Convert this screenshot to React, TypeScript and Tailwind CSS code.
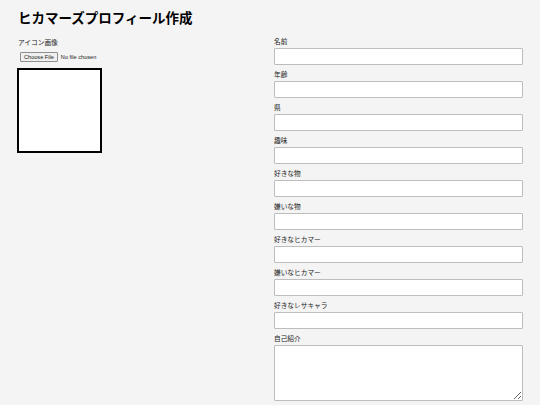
import React from 'react'

const fields = [
    '名前',
    '年齢',
    '県',
    '趣味',
    '好きな物',
    '嫌いな物',
    '好きなヒカマー',
    '嫌いなヒカマー',
    '好きなレサキャラ',
]

export default function App() {
    return (
        <div className="min-h-[405px] w-[540px] bg-[#f4f4f4] px-[18px] pt-[9px] font-['Liberation_Sans','Noto_Sans_CJK_JP',sans-serif] text-[#222]">
            <h1 className="text-[13.5px] font-bold leading-[20px] text-black">ヒカマーズプロフィール作成</h1>

            <div className="mt-[8px] flex">
                {/* icon side */}
                <div className="w-[256px] shrink-0 pt-px">
                    <div className="text-[6.7px] leading-[10px]">アイコン画像</div>
                    <div className="mt-[4px] flex items-center pl-[2px] text-[5.6px] leading-[9px]">
                        <span className="rounded-[1px] border border-[#8f8f8f] bg-[#efefef] px-[3px] leading-[8px]">Choose File</span>
                        <span className="ml-[3px]">No file chosen</span>
                    </div>
                    <div className="-ml-px mt-[6px] h-[85px] w-[85px] border-[2.5px] border-black bg-white" />
                </div>

                {/* form side */}
                <div className="w-[249px] shrink-0">
                    {fields.map((f) => (
                        <div key={f} className="mb-[5px]">
                            <div className="text-[6.7px] leading-[10px]">{f}</div>
                            <input
                                type="text"
                                className="mt-[1px] block h-[17px] w-full rounded-[1px] border border-[#bdbdbd] bg-white"
                            />
                        </div>
                    ))}
                    <div>
                        <div className="text-[6.7px] leading-[10px]">自己紹介</div>
                        <textarea className="mt-[1px] block h-[56px] w-full resize rounded-[1px] border border-[#bdbdbd] bg-white" />
                    </div>
                </div>
            </div>
        </div>
    )
}
